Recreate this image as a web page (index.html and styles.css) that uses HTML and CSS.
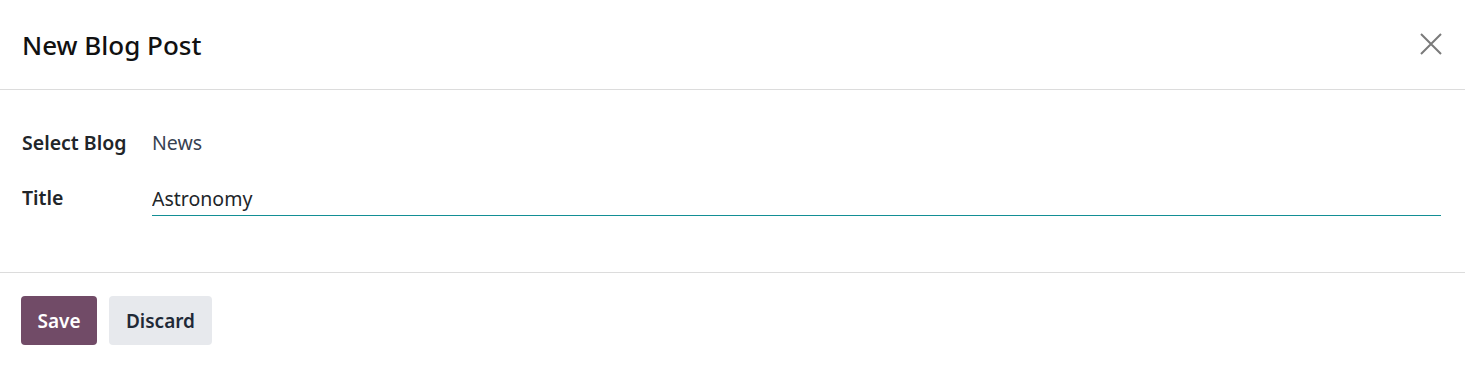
FILE: index.html
```html
<!DOCTYPE html>
<html>
<head>
  <title>New Blog Post</title>
  <link rel="stylesheet" href="styles.css">
</head>
<body>
  <div class="modal">
    <div class="modal-header">
      <h4 class="modal-title">New Blog Post</h4>
      <button type="button" class="btn-close" aria-label="Close">
        <svg width="22" height="22" viewBox="0 0 22 22"><path d="M1 1 L21 21 M21 1 L1 21" stroke="#7a7a7a" stroke-width="2" fill="none"/></svg>
      </button>
    </div>

    <div class="modal-body">
      <div class="form-row">
        <label class="form-label">Select Blog</label>
        <div class="form-value">News</div>
      </div>
      <div class="form-row">
        <label class="form-label" for="title">Title</label>
        <div class="form-field">
          <input type="text" id="title" class="form-input" value="Astronomy">
        </div>
      </div>
    </div>

    <div class="modal-footer">
      <button type="button" class="btn btn-primary">Save</button>
      <button type="button" class="btn btn-secondary">Discard</button>
    </div>
  </div>
</body>
</html>
```

FILE: styles.css
```css
body {
  margin: 0;
  padding: 0;
  background-color: #fff;
  font-family: "Noto Sans", "Open Sans", sans-serif;
  color: #212529;
}

.modal {
  width: 1465px;
  height: 367px;
  background-color: #fff;
}

.modal-header {
  display: flex;
  align-items: center;
  justify-content: space-between;
  height: 90px;
  padding: 0 22px;
  border-bottom: 1px solid #dcdcdc;
  box-sizing: border-box;
}

.modal-title {
  margin: 0;
  font-size: 26px;
  font-weight: 500;
  color: #111;
}

.btn-close {
  border: none;
  background: none;
  padding: 0;
  margin-right: 1px;
  margin-bottom: 2px;
  width: 22px;
  height: 22px;
  cursor: pointer;
}

.modal-body {
  height: 183px;
  padding: 39px 24px 0 22px;
  box-sizing: border-box;
  border-bottom: 1px solid #dcdcdc;
}

.form-row {
  display: flex;
  align-items: flex-start;
  height: 55px;
}

.form-label {
  width: 130px;
  font-size: 19.5px;
  font-weight: 600;
  color: #212529;
  line-height: 28px;
}

.form-value {
  font-size: 19.5px;
  line-height: 28px;
  color: #374151;
}

.form-field {
  flex: 1;
  height: 31px;
  border-bottom: 1px solid #138f95;
}

.form-input {
  display: block;
  width: 100%;
  height: 30px;
  box-sizing: border-box;
  border: none;
  outline: none;
  padding: 0;
  font-family: inherit;
  font-size: 19.5px;
  line-height: 30px;
  color: #212529;
  background: transparent;
}

.modal-footer {
  display: flex;
  gap: 12px;
  padding: 23px 21px;
}

.btn {
  height: 49px;
  border: none;
  border-radius: 4px;
  padding: 0 16px;
  font-family: inherit;
  font-size: 19px;
  font-weight: 600;
  cursor: pointer;
}

.btn-primary {
  background-color: #714b67;
  color: #fff;
  width: 76px;
}

.btn-secondary {
  background-color: #e7e9ed;
  color: #1f2937;
  width: 103px;
}
```
